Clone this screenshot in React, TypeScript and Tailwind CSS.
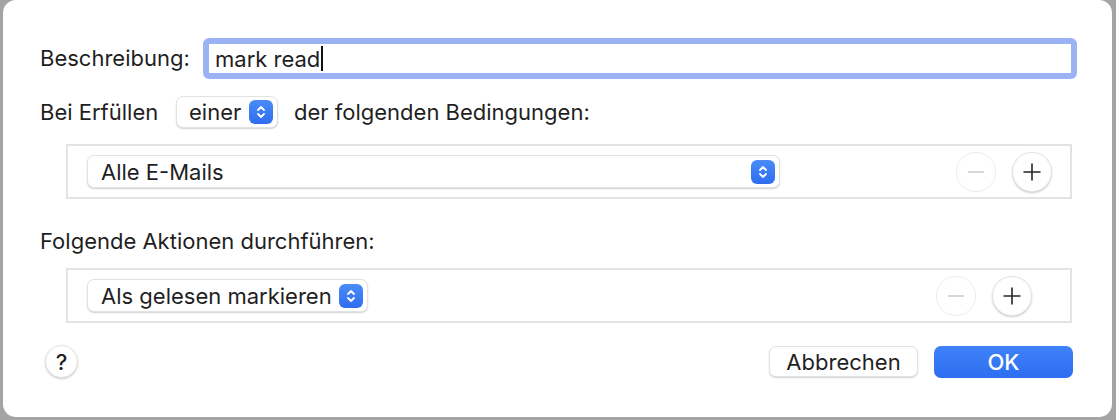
import React from "react";

const font = { fontFamily: 'Inter, "Noto Sans", sans-serif' };

function Stepper({ className = "" }: { className?: string }) {
  return (
    <span className={`flex items-center justify-center rounded-[6px] bg-gradient-to-b from-[#4a8cf8] to-[#2f6cf0] ${className}`}>
      <svg width="10" height="16" viewBox="0 0 10 16" fill="none">
        <path d="M2 6 L5 3 L8 6" stroke="white" strokeWidth="1.8" strokeLinecap="round" strokeLinejoin="round" />
        <path d="M2 10 L5 13 L8 10" stroke="white" strokeWidth="1.8" strokeLinecap="round" strokeLinejoin="round" />
      </svg>
    </span>
  );
}

function Popup({ label, className = "" }: { label: string; className?: string }) {
  return (
    <div className={`flex items-center justify-between rounded-[7px] bg-white border border-[#e2e2e2] shadow-[0_1px_1.5px_rgba(0,0,0,0.18)] ${className}`}>
      <span className="text-[22px] text-[#1f1f1f] leading-none">{label}</span>
      <Stepper className="w-[24px] h-[24px]" />
    </div>
  );
}

function Circle({ children, disabled = false }: { children: React.ReactNode; disabled?: boolean }) {
  return (
    <div
      className={`flex items-center justify-center w-[40px] h-[40px] rounded-full bg-white ${
        disabled
          ? "border border-[#ececec]"
          : "border border-[#e4e4e4] shadow-[0_1px_2px_rgba(0,0,0,0.2)]"
      }`}
    >
      {children}
    </div>
  );
}

function Minus() {
  return (
    <svg width="20" height="20" viewBox="0 0 20 20">
      <path d="M2 10 H18" stroke="#cfcfcf" strokeWidth="1.6" />
    </svg>
  );
}
function Plus() {
  return (
    <svg width="20" height="20" viewBox="0 0 20 20">
      <path d="M1.5 10 H18.5 M10 1.5 V18.5" stroke="#262626" strokeWidth="1.6" />
    </svg>
  );
}

export default function App() {
  return (
    <div className="w-[1116px] h-[420px] bg-[#a4a4a4] flex" style={font}>
      <div className="flex-1 ml-[3px] mr-[4px] mb-[3px] bg-white rounded-[13px] flex flex-col pl-[37px] pr-[35px] pt-[38px] text-[#1f1f1f]">
        {/* Beschreibung */}
        <div className="flex items-center h-[41px]">
          <span className="text-[22px] w-[163px]">Beschreibung:</span>
          <div className="flex-1 h-[41px] rounded-[6px] border-[6px] border-[#9bb3f4] bg-white flex items-center pl-[6px]">
            <span className="text-[22px] leading-none">mark read</span>
            <span className="w-[2px] h-[25px] bg-[#111] ml-[1px]" />
          </div>
        </div>

        {/* Bei Erfüllen */}
        <div className="flex items-center mt-[17px] h-[32px]">
          <span className="text-[22px] w-[136px]">Bei Erfüllen</span>
          <Popup label="einer" className="w-[102px] h-[32px] pl-[12px] pr-[4px]" />
          <span className="text-[22px] ml-[16px]">der folgenden Bedingungen:</span>
        </div>

        {/* Conditions box */}
        <div className="ml-[26px] mr-[5px] mt-[16px] h-[55px] border-2 border-[#e3e3e3] flex items-center pl-[19px] pr-[18px]">
          <Popup label="Alle E-Mails" className="w-[693px] h-[33px] pl-[13px] pr-[4px]" />
          <div className="flex-1" />
          <div className="flex gap-[16px]">
            <Circle disabled>
              <Minus />
            </Circle>
            <Circle>
              <Plus />
            </Circle>
          </div>
        </div>

        {/* Folgende Aktionen */}
        <div className="mt-[26px] text-[22px] h-[32px] flex items-center">Folgende Aktionen durchführen:</div>

        <div className="ml-[26px] mr-[5px] mt-[11px] h-[55px] border-2 border-[#e3e3e3] flex items-center pl-[19px] pr-[38px]">
          <Popup label="Als gelesen markieren" className="w-[281px] h-[33px] pl-[13px] pr-[4px]" />
          <div className="flex-1" />
          <div className="flex gap-[16px]">
            <Circle disabled>
              <Minus />
            </Circle>
            <Circle>
              <Plus />
            </Circle>
          </div>
        </div>

        {/* Bottom buttons */}
        <div className="flex items-center mt-[22px]">
          <div className="ml-[5px] w-[33px] h-[33px] rounded-full bg-white border border-[#e4e4e4] shadow-[0_1px_2px_rgba(0,0,0,0.2)] flex items-center justify-center text-[22px] font-medium leading-none">
            ?
          </div>
          <div className="flex-1" />
          <div className="w-[149px] h-[31px] rounded-[7px] bg-white border border-[#e2e2e2] shadow-[0_1px_1.5px_rgba(0,0,0,0.18)] flex items-center justify-center text-[22px] leading-none">
            Abbrechen
          </div>
          <div className="ml-[16px] w-[139px] h-[32px] rounded-[7px] bg-gradient-to-b from-[#3f82f8] to-[#2e6ef2] flex items-center justify-center text-[22px] font-medium text-white leading-none mr-[4px]">
            OK
          </div>
        </div>
      </div>
    </div>
  );
}
